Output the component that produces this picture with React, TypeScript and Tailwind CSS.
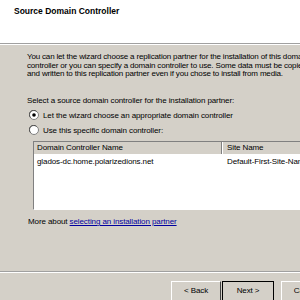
import React from "react";

function Radio({ checked }: { checked?: boolean }) {
  return (
    <svg width="10" height="10" viewBox="0 0 10 10" className="shrink-0">
      <circle cx="5" cy="5" r="4.5" fill="#ffffff" stroke="#808080" strokeWidth="1" />
      <path d="M1.5 7.5 A4 4 0 0 1 7.5 1.5" fill="none" stroke="#404040" strokeWidth="0.8" />
      {checked && <circle cx="5" cy="5" r="1.8" fill="#000000" />}
    </svg>
  );
}

function Btn({ label, def }: { label: string; def?: boolean }) {
  return (
    <div
      className={`h-[22px] flex items-start justify-center pt-[4px] bg-[#d4d0c8] border ${
        def ? "border-[#000000] w-[52px]" : "border-t-white border-l-white border-r-[#404040] border-b-[#404040] w-[50px]"
      }`}
    >
      <span>{label}</span>
    </div>
  );
}

export default function App() {
  return (
    <div
      className="w-[300px] h-[300px] overflow-hidden bg-[#d4d0c8] text-[8px] leading-[9px] tracking-[-0.1px] text-black"
      style={{ fontFamily: '"Liberation Sans", Arial, sans-serif' }}
    >
      <div className="w-[520px]">
        <div className="h-[43px] bg-white pl-[14px] pt-[7px] font-bold text-[8.5px] tracking-normal">Source Domain Controller</div>
        <div className="h-px bg-[#a0a0a0]" />
        <div className="h-px bg-white" />

        <div className="pl-[27px] pt-[8px] whitespace-nowrap">
          <p className="leading-[8.7px] tracking-[-0.17px]">
            You can let the wizard choose a replication partner for the installation of this domain
            <br />
            controller or you can specify a domain controller to use. Some data must be copied from
            <br />
            and written to this replication partner even if you chose to install from media.
          </p>

          <p className="mt-[17px]">Select a source domain controller for the installation partner:</p>

          <div className="mt-[5px] flex items-center gap-[4px] pl-[2px]">
            <Radio checked />
            <span>Let the wizard choose an appropriate domain controller</span>
          </div>
          <div className="mt-[5px] flex items-center gap-[4px] pl-[2px]">
            <Radio />
            <span>Use this specific domain controller:</span>
          </div>

          <div className="mt-[6px] ml-[6px] h-[69px] bg-white border border-t-[#808080] border-l-[#808080] border-r-white border-b-white">
            <div className="flex h-[12px] bg-[#d4d0c8]">
              <div className="w-[188px] pl-[3px] pt-px border-r border-r-[#808080]">Domain Controller Name</div>
              <div className="flex-1 pl-[4px] pt-px border-l border-l-white">Site Name</div>
            </div>
            <div className="flex pt-[3px]">
              <div className="w-[189px] pl-[3px]">glados-dc.home.polarizedions.net</div>
              <div className="pl-[4px]">Default-First-Site-Name</div>
            </div>
          </div>

          <p className="mt-[7px] pl-px">
            More about <span className="text-[#0000a0] underline">selecting an installation partner</span>
          </p>
        </div>

        <div className="mt-[45px] h-px bg-[#a0a0a0]" />
        <div className="h-px bg-white" />

        <div className="flex pl-[171px] pt-[8px]">
          <Btn label="< Back" />
          <div className="ml-px">
            <Btn label="Next >" def />
          </div>
          <div className="ml-[7px]">
            <Btn label="Cancel" />
          </div>
        </div>
      </div>
    </div>
  );
}
